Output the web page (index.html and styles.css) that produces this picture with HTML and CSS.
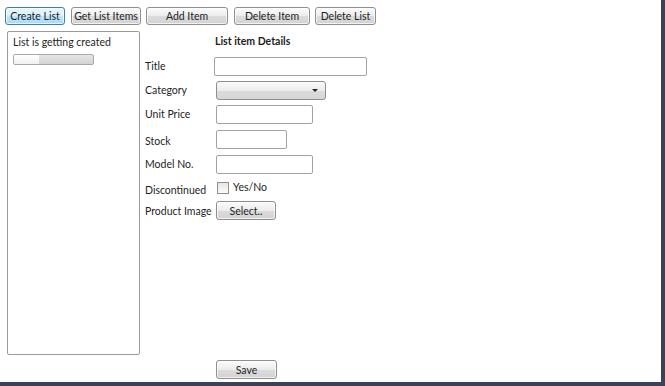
FILE: index.html
```html
<!DOCTYPE html>
<html lang="en">
<head>
    <meta charset="UTF-8">
    <title>List Manager</title>
    <link rel="stylesheet" href="styles.css">
</head>
<body>
    <div class="frame">
        <div class="toolbar">
            <button class="btn btn-active w-create">Create List</button>
            <button class="btn w-get">Get List Items</button>
            <button class="btn w-add">Add Item</button>
            <button class="btn w-delitem">Delete Item</button>
            <button class="btn w-dellist">Delete List</button>
        </div>

        <div class="main">
            <div class="status-panel">
                <div class="status-text">List is getting created</div>
                <div class="progress"><div class="progress-fill"></div></div>
            </div>

            <div class="details">
                <div class="details-title">List item Details</div>
                <div class="form">
                    <label class="lbl">Title</label>
                    <div class="ctl"><input class="txt w-title" type="text"></div>

                    <label class="lbl">Category</label>
                    <div class="ctl"><div class="combo"><span class="combo-arrow"></span></div></div>

                    <label class="lbl">Unit Price</label>
                    <div class="ctl"><input class="txt w-price" type="text"></div>

                    <label class="lbl lbl-low">Stock</label>
                    <div class="ctl"><input class="txt w-stock" type="text"></div>

                    <label class="lbl">Model No.</label>
                    <div class="ctl"><input class="txt w-model" type="text"></div>

                    <label class="lbl lbl-low">Discontinued</label>
                    <div class="ctl"><span class="check"></span><span class="check-text">Yes/No</span></div>

                    <label class="lbl">Product Image</label>
                    <div class="ctl"><button class="btn w-select">Select..</button></div>
                </div>
            </div>
        </div>

        <div class="footer">
            <button class="btn w-save">Save</button>
        </div>
    </div>
</body>
</html>
```

FILE: styles.css
```css
body {
    margin: 0;
    background: #fff;
    font-family: Lato, 'Open Sans', sans-serif;
    font-size: 10.5px;
    color: #1e1e1e;
}
.frame {
    width: 661px;
    height: 382px;
    border-right: 4px solid #3b4257;
    border-bottom: 4px solid #3b4257;
    background: #fff;
    overflow: hidden;
}
.toolbar {
    display: flex;
    padding: 7px 0 0 5px;
    height: 18px;
}
.btn {
    font-family: inherit;
    font-size: 10.5px;
    color: #1e1e1e;
    height: 18px;
    padding: 0;
    margin-right: 5px;
    border: 1px solid #8f8f8f;
    border-radius: 3px;
    background: linear-gradient(#fbfbfb 0%, #ececec 50%, #dcdcdc 51%, #d2d2d2 100%);
    box-shadow: inset 0 0 0 1px rgba(255,255,255,0.7);
    white-space: nowrap;
}
.btn-active {
    border-color: #3c7fb1;
    background: linear-gradient(#eaf6fd 0%, #d9f0fc 50%, #bee6fd 51%, #a7d9f5 100%);
}
.w-create { width: 60px; margin-right: 6px; }
.w-get { width: 70px; }
.w-add { width: 82px; margin-right: 6px; }
.w-delitem { width: 76px; }
.w-dellist { width: 61px; }
.w-select { width: 60px; height: 19px; margin-left: 2px; }
.w-save { width: 61px; height: 19px; }

.main {
    display: flex;
    margin-top: 6px;
    height: 324px;
}
.status-panel {
    margin-left: 7px;
    width: 131px;
    height: 322px;
    border: 1px solid #9a9a9a;
    border-radius: 2px;
}
.status-text {
    padding: 3px 0 0 5px;
    line-height: 14px;
}
.progress {
    margin: 5px 0 0 5px;
    width: 79px;
    height: 9px;
    border: 1px solid #a8a8a8;
    border-radius: 2px;
    background: linear-gradient(#e6e6e6, #d3d3d3);
    overflow: hidden;
}
.progress-fill {
    width: 25px;
    height: 100%;
    background: linear-gradient(#ffffff, #f0f0f0);
}

.details {
    margin-left: 5px;
}
.details-title {
    font-weight: bold;
    margin: 3px 0 0 70px;
    line-height: 14px;
}
.form {
    display: grid;
    grid-template-columns: 69px auto;
    grid-template-rows: 24px 24px 24px 26px 24px 23px 23px;
    margin-top: 6px;
}
.lbl {
    display: flex;
    align-items: center;
    white-space: nowrap;
}
.lbl-low {
    padding-top: 4px;
}
.ctl {
    display: flex;
    align-items: center;
}
.txt {
    box-sizing: border-box;
    height: 19px;
    border: 1px solid #a3a3a3;
    border-radius: 2px;
    background: #fff;
    margin: 0 0 0 2px;
}
.w-title { width: 153px; margin-left: 0; }
.w-price { width: 97px; }
.w-stock { width: 71px; }
.w-model { width: 97px; }
.combo {
    box-sizing: border-box;
    margin-left: 2px;
    width: 110px;
    height: 19px;
    border: 1px solid #8f8f8f;
    border-radius: 3px;
    background: linear-gradient(#fbfbfb 0%, #ececec 50%, #dcdcdc 51%, #d6d6d6 100%);
    position: relative;
}
.combo-arrow {
    position: absolute;
    right: 7px;
    top: 7px;
    border-left: 3px solid transparent;
    border-right: 3px solid transparent;
    border-top: 3px solid #222;
}
.check {
    box-sizing: border-box;
    display: inline-block;
    margin-left: 3px;
    width: 12px;
    height: 12px;
    border: 1px solid #8e8f8f;
    background: linear-gradient(#e6e6e6, #fafafa);
}
.check-text {
    margin-left: 4px;
    margin-top: -1px;
}
.footer {
    padding: 5px 0 0 216px;
}
```
